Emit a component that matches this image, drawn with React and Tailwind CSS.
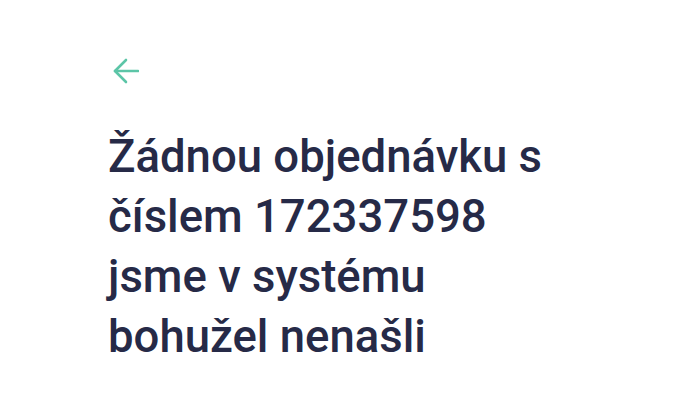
import React from "react";

export default function App() {
  return (
    <div className="w-[700px] h-[400px] bg-white overflow-hidden" style={{ fontFamily: "Roboto, 'Noto Sans', sans-serif" }}>
      <div className="pl-[108px] pt-[58px]">
        <button className="block ml-[5px] text-[#5cc5a7]">
          <svg className="block" width="26" height="26" viewBox="0 0 26 26" fill="none" stroke="currentColor" strokeWidth="2.6" strokeLinecap="round" strokeLinejoin="round">
            <path d="M25 13H2" />
            <path d="M13 2 2 13l11 11" />
          </svg>
        </button>
        <h1 className="mt-[43px] text-[45.5px] leading-[60px] font-medium text-[#262a47] w-[450px]">
          Žádnou objednávku s číslem 172337598 jsme v systému bohužel nenašli
        </h1>
      </div>
    </div>
  );
}
